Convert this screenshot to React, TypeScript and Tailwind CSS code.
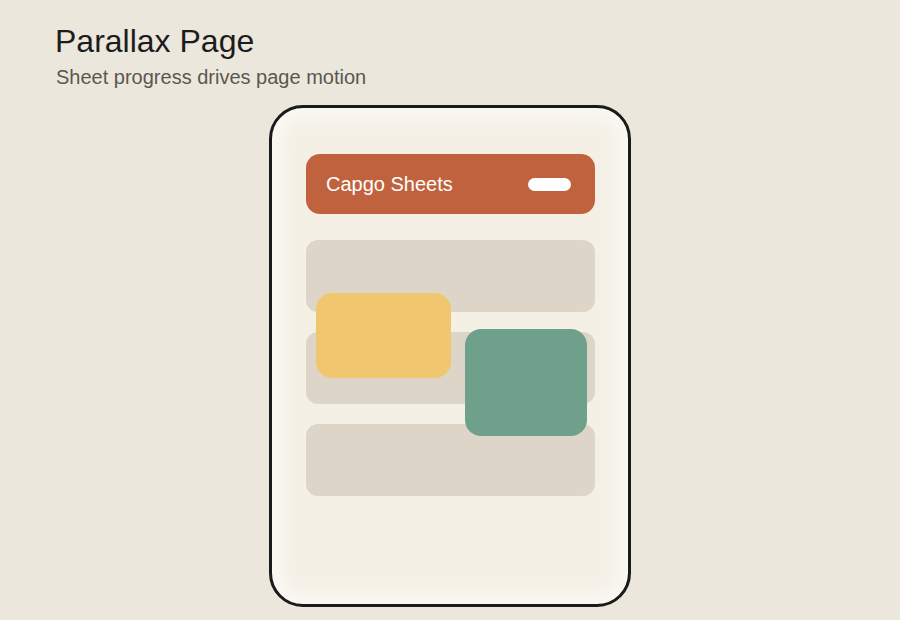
import React from "react";

const rows = [0, 1, 2];

const App = () => {
  return (
    <div className="w-[900px] h-[620px] overflow-hidden bg-[#ece7dc] font-['Liberation_Sans',Arial,sans-serif]">
      <div className="pl-[55px] pt-[22px]">
        <h1 className="text-[32px] leading-[38px] text-[#1c1c1c]">Parallax Page</h1>
        <p className="mt-[5px] ml-px text-[20px] leading-[24px] text-[#5b5750]">
          Sheet progress drives page motion
        </p>
      </div>

      <div className="flex justify-center mt-[16px]">
        <div className="w-[362px] h-[502px] rounded-[34px] border-[3px] border-[#1a1a1a] bg-[#f4f0e6] shadow-[inset_0_0_18px_10px_#faf8f3] pl-[34px] pr-[33px] pt-[46px]">
          <div className="h-[60px] rounded-[14px] bg-[#c0623e] flex items-center justify-between pl-[20px] pr-[24px]">
            <span className="text-[20px] text-white">Capgo Sheets</span>
            <span className="w-[43px] h-[13px] rounded-full bg-white" />
          </div>

          <div className="relative mt-[26px] flex flex-col gap-[20px]">
            {rows.map((r) => (
              <div key={r} className="h-[72px] rounded-[12px] bg-[#ded5c9]" />
            ))}
            <div className="absolute left-[10px] top-[53px] w-[135px] h-[85px] rounded-[16px] bg-[#f0c76e]" />
            <div className="absolute left-[159px] top-[89px] w-[122px] h-[107px] rounded-[16px] bg-[#6fa08c]" />
          </div>
        </div>
      </div>
    </div>
  );
};

export default App;
